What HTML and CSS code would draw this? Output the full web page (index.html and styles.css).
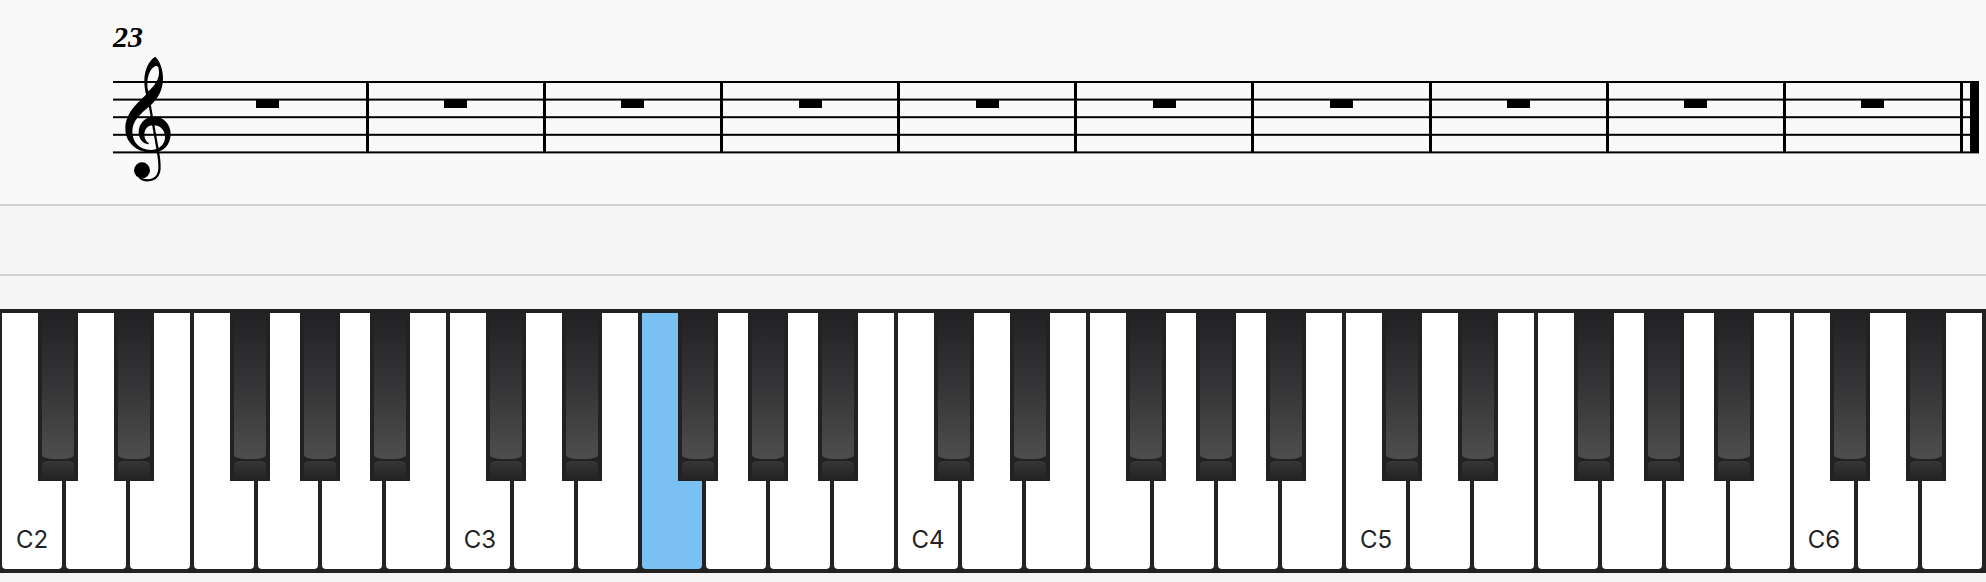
FILE: index.html
```html
<!DOCTYPE html>
<html lang="en">
    <head>
        <meta charset="UTF-8">
        <meta name="viewport" content="width=device-width, initial-scale=1.0">
        <title>Piano</title>
        <link rel="stylesheet" href="styles.css">
    </head>
    <body>
        <main class="score">
            <div class="measure-number">23</div>
            <div class="staff">
                <svg class="staff-lines" aria-hidden="true">
                    <rect y="0" width="100%" height="2"/>
                    <rect y="17.6" width="100%" height="2"/>
                    <rect y="35.2" width="100%" height="2"/>
                    <rect y="52.8" width="100%" height="2"/>
                    <rect y="70.4" width="100%" height="2"/>
                </svg>
                <svg class="clef" viewBox="100 135 150 384" role="img" aria-label="Treble clef">
                    <path fill-rule="evenodd" d="M197 140C178 150 164 180 164 212C164 228 166 240 169 254C140 282 107 310 107 356C107 400 145 428 187 428C220 428 243 405 243 372C243 342 222 320 192 320C165 320 147 342 147 366C147 386 158 400 176 403L178 400C169 394 164 385 164 374C164 358 174 346 190 346C212 346 226 360 226 382C226 404 208 420 183 420C150 420 128 398 128 364C128 334 150 312 182 287C206 264 220 240 220 205C220 180 212 155 197 140ZM200 168C185 170 173 195 173 220C173 230 174 238 176 244C195 226 208 208 208 188C208 176 206 168 200 168Z"/>
                    <path class="stem" d="M173 245L205 425C209 450 212 472 208 486C203 505 188 511 174 511C163 511 155 508 150 502"/>
                    <circle cx="157" cy="481" r="24"/>
                </svg>
                <div class="measures" id="measures"></div>
                <div class="final-bar"></div>
            </div>
        </main>

        <div class="toolbar"></div>

        <div class="keyboard-panel">
            <div class="keyboard" id="keyboard"></div>
        </div>

        <script>
            const measures = document.getElementById('measures');
            const keyboard = document.getElementById('keyboard');

            const measureCount = 10;
            const whiteKeyCount = 31;
            const firstOctave = 2;
            const notes = ['C', 'D', 'E', 'F', 'G', 'A', 'B'];
            const sharps = ['C', 'D', 'F', 'G', 'A'];
            const activeKey = 'F3';

            measures.innerHTML = '<div class="measure"><span class="rest"></span></div>'.repeat(measureCount);

            for (let i = 0; i < whiteKeyCount; i++) {
                const note = notes[i % 7];
                const octave = firstOctave + Math.floor(i / 7);
                const slot = document.createElement('div');
                slot.className = 'key-slot';

                const white = document.createElement('button');
                white.className = 'white-key';
                white.setAttribute('aria-label', note + octave);
                if (note + octave === activeKey) {
                    white.classList.add('active');
                }
                if (note === 'C') {
                    white.textContent = note + octave;
                }
                slot.appendChild(white);

                if (sharps.includes(note)) {
                    const black = document.createElement('button');
                    black.className = 'black-key ' + note.toLowerCase() + '-sharp';
                    black.setAttribute('aria-label', note + '#' + octave);
                    slot.appendChild(black);
                }

                keyboard.appendChild(slot);
            }
        </script>
    </body>
</html>
```

FILE: styles.css
```css
* {
    box-sizing: border-box;
}

body {
    margin: 0;
    background-color: #f5f5f5;
    font-family: Inter, sans-serif;
}

.score {
    padding: 20px 7px 51px 113px;
    background-color: #f9f9f9;
    border-bottom: 2px solid #cfcfcf;
}

.measure-number {
    height: 61px;
    font-family: "Liberation Serif", serif;
    font-size: 30px;
    font-style: italic;
    font-weight: bold;
    line-height: 34px;
}

.staff {
    position: relative;
    display: flex;
    height: 72px;
}

.staff-lines {
    position: absolute;
    width: 100%;
    height: 73px;
}

/* the clef reaches above and below the staff */
.clef {
    width: 50px;
    height: 128px;
    margin: -26px -4px 0 10px;
    flex: none;
}

.stem {
    fill: none;
    stroke: #000;
    stroke-width: 7;
}

.measures {
    display: flex;
    flex: 1;
}

.measure {
    display: flex;
    justify-content: center;
    flex: 1 1 0;
    border-right: 3px solid #000;
}

.measure:first-child {
    flex-grow: 1.13;
}

.rest {
    width: 23px;
    height: 9px;
    margin-top: 18px;
    background-color: #000;
}

.final-bar {
    width: 16px;
    border-right: 9px solid #000;
}

.toolbar {
    height: 70px;
    border-bottom: 2px solid #d2d2d2;
}

.keyboard-panel {
    padding: 33px 0 9px;
}

.keyboard {
    display: flex;
    gap: 4px;
    padding: 4px 4px 4px 2px;
    background-color: #222;
}

.key-slot {
    position: relative;
    flex: 1 1 0;
    height: 256px;
}

.white-key {
    display: flex;
    align-items: flex-end;
    justify-content: center;
    width: 100%;
    height: 100%;
    padding: 0 0 14px;
    border: none;
    border-radius: 0 0 4px 4px;
    background-color: #fff;
    color: #222;
    font-family: inherit;
    font-size: 24px;
    line-height: 30px;
    cursor: pointer;
}

.white-key.active {
    background-color: #7bc0f3;
}

.black-key {
    position: absolute;
    top: 0;
    z-index: 1;
    width: 40px;
    height: 168px;
    padding: 0;
    border: none;
    background-color: #222;
    cursor: pointer;
}

.black-key::before,
.black-key::after {
    content: "";
    display: block;
    margin: 0 4px;
}

.black-key::before {
    height: 146px;
    border-radius: 0 0 12px 12px / 0 0 4px 4px;
    background: linear-gradient(#222224, #353537 50%, #4d4d4d);
}

.black-key::after {
    height: 20px;
    margin-top: 2px;
    border-radius: 6px 6px 0 0 / 3px 3px 0 0;
    background: linear-gradient(#363636, #222224);
}

.c-sharp,
.f-sharp {
    left: 60%;
}

.g-sharp {
    left: 70%;
}

.d-sharp,
.a-sharp {
    left: 80%;
}
```
